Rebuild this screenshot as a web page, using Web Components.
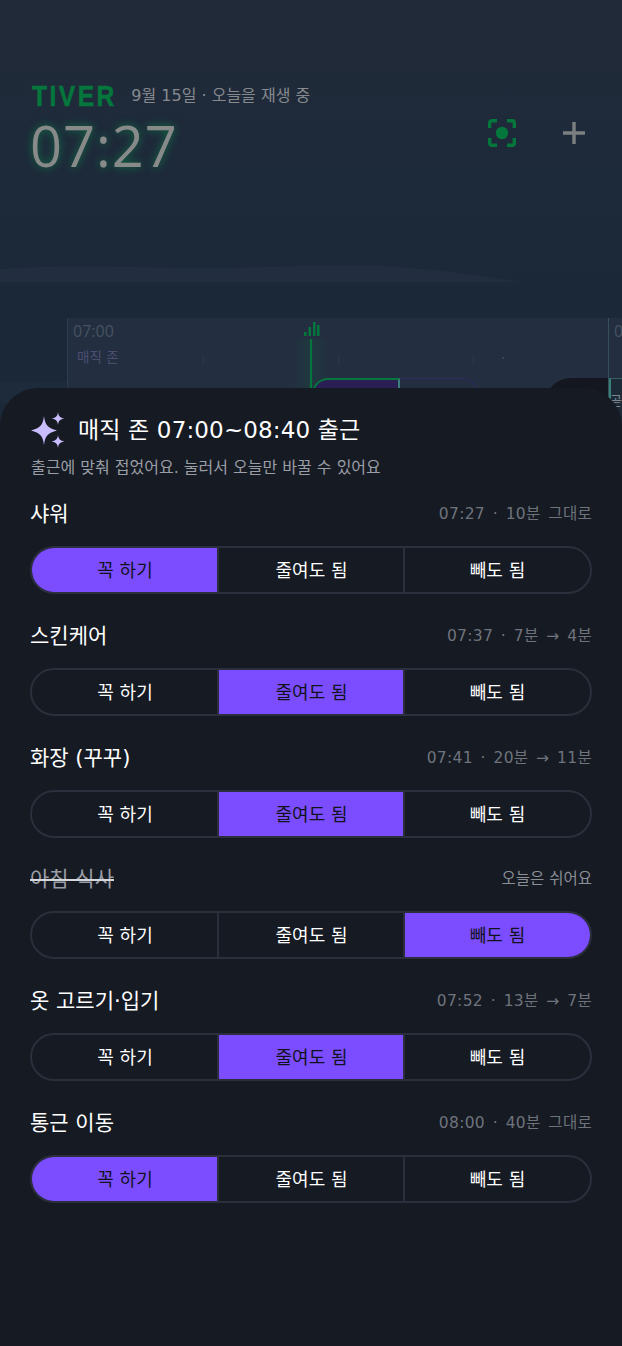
<!DOCTYPE html>
<html lang="ko">
<head>
<meta charset="utf-8">
<title>TIVER</title>
<style>
  html, body { margin: 0; height: 100%; background: #1a2636; }
  body { font-family: "DejaVu Sans", "Noto Sans CJK KR", sans-serif; overflow: hidden; }
</style>
</head>
<body>
<tiver-app></tiver-app>

<template id="home-header-tpl">
  <style>
    :host { display: block; padding: 82px 31px 0 32px; }
    .top { display: flex; align-items: center; gap: 14px; height: 28px; }
    .logo { font: 700 30px/28px "Liberation Sans", sans-serif; letter-spacing: 3px; color: #05763c;
      -webkit-text-stroke: .6px #05763c; transform: scaleX(.82); transform-origin: 0 50%; margin-right: -18px; }
    .date { font-size: 16px; color: #868a8f; margin-top: -4px; }
    .row { display: flex; align-items: flex-start; margin-top: 3px; }
    .clock { flex: 1; margin-left: -2px; font: 400 56px/64px "Open Sans", sans-serif; letter-spacing: 1px; color: #888a8a;
      text-shadow: 0 0 8px rgba(10, 150, 80, .7); }
    .actions { display: flex; align-items: center; gap: 45px; margin: 5px 5px 0 0; }
    svg { display: block; }
  </style>
  <div class="top"><span class="logo">TIVER</span><span class="date">9월 15일 · 오늘을 재생 중</span></div>
  <div class="row">
    <div class="clock">07:27</div>
    <div class="actions">
      <svg width="30" height="30" viewBox="0 0 30 30" fill="none" stroke="#05763c" stroke-width="3.400">
        <path d="M2.700 10V4.700a2 2 0 0 1 2-2H10M20 2.700h5.300a2 2 0 0 1 2 2V10M27.300 20v5.300a2 2 0 0 1-2 2H20M10 27.300H4.700a2 2 0 0 1-2-2V20"/>
        <circle cx="15" cy="15" r="6.200" fill="#05763c" stroke="none"/>
      </svg>
      <svg width="24" height="24" viewBox="0 0 24 24" fill="none" stroke="#7c7f80" stroke-width="3.400">
        <path d="M12 1v22M1 12h22"/>
      </svg>
    </div>
  </div>
</template>

<template id="time-line-tpl">
  <style>
    :host { display: block; position: absolute; left: 0; top: 262px; width: 622px; height: 160px; }
    .wave { position: absolute; left: 0; top: 0; }
    .band { position: absolute; left: 0; top: 120px; width: 67px; height: 20px; background: #1e2b3b; }
    .panel { position: absolute; left: 67px; top: 56px; width: 541px; height: 84px; background: #232f40;
      border-left: 1px solid #2e3b4a; }
    .panel.next { left: 608px; width: 20px; height: 104px; border-left-color: #35505a; }
    .hour { position: absolute; left: 5px; top: 3px; font: 400 16px/20px "Open Sans", sans-serif; color: #465260; }
    .zone { position: absolute; left: 9px; top: 29px; font-size: 13.500px; line-height: 20px; color: #4e4d72; }
    .bars { position: absolute; left: 236px; top: 4px; }
    .stem { position: absolute; left: 242px; top: 21px; width: 2px; height: 63px; background: #05763c; }
    .glow { position: absolute; left: 226px; top: 21px; width: 34px; height: 63px;
      background: linear-gradient(90deg, transparent, rgba(5, 118, 60, .14), transparent); }
    .tick { position: absolute; top: 37px; width: 1px; height: 10px; background: #2b3848; }
    .dot { position: absolute; left: 434px; top: 39px; width: 2px; height: 2px; background: #3a4656; }
    .done { position: absolute; left: 244px; top: 60px; width: 88px; height: 30px; box-sizing: border-box;
      background: #2a1f55; border: 2px solid #05763c; border-right-color: #3a7f78; border-bottom: 0; border-radius: 16px 0 0 0; }
    .rest { position: absolute; left: 332px; top: 60px; width: 78px; height: 30px; box-sizing: border-box;
      border: 1px solid #2f2a60; border-left: 0; border-bottom: 0; border-radius: 0 16px 0 0; }
    .pill { position: absolute; left: 545px; top: 116px; width: 63px; height: 30px; background: #14171f; border-radius: 26px 0 0 0; }
    .next-card { position: absolute; left: 0; top: 60px; width: 20px; height: 44px; background: #1c2a38;
      border-top: 1px solid #3a5f63; border-left: 2px solid #3a7f78; }
    .next-text { position: absolute; left: 1px; top: 74px; font-size: 13px; line-height: 18px; color: #7f8690; white-space: nowrap; }
  </style>
  <svg class="wave" width="622" height="20" viewBox="0 0 622 20">
    <path d="M0 7C60 3 120 5 190 6S320 1 380 4 480 14 522 20H0Z" fill="#222e3f"/>
  </svg>
  <div class="band"></div>
  <div class="panel">
    <span class="hour">07:00</span>
    <span class="zone">매직 존</span>
    <svg class="bars" width="16" height="15" viewBox="0 0 16 15" fill="#05763c">
      <rect x="0" y="10" width="2.500" height="4"/><rect x="4.500" y="5" width="2.500" height="9"/>
      <rect x="9" y="0" width="2.500" height="14"/><rect x="13" y="3" width="2.500" height="11"/>
    </svg>
    <div class="glow"></div>
    <div class="tick" style="left:135px"></div>
    <div class="tick" style="left:270px"></div>
    <div class="tick" style="left:405px"></div>
    <div class="dot"></div>
    <div class="stem"></div>
    <div class="done"></div>
    <div class="rest"></div>
  </div>
  <div class="pill"></div>
  <div class="panel next">
    <span class="hour">07:00</span>
    <div class="next-card"></div>
    <span class="next-text">곧 시작</span>
  </div>
</template>

<template id="bottom-sheet-tpl">
  <style>
    :host { display: block; position: absolute; left: 0; right: 0; top: 388px; bottom: 0; box-sizing: border-box;
      padding: 25px 30px 0; background: #161a23; border-radius: 38px 38px 0 0; color: #fff; }
    .head { display: flex; align-items: center; gap: 12px; height: 34px; }
    h1 { margin: 0; font-size: 23px; font-weight: 400; line-height: 34px; letter-spacing: .15px; }
    p { margin: 8px 0 0 1px; font-size: 16px; line-height: 26px; color: #9a9ea6; }
    svg { display: block; flex: none; margin-left: 1px; }
    .list { margin-top: 15px; display: flex; flex-direction: column; gap: 23.800px; }
  </style>
  <div class="head">
    <svg width="35" height="36" viewBox="0 0 35 36" fill="#cabdff">
      <path d="M13 4C14 13 17 16 26 18.500 17 21 14 24 13 33 12 24 9 21 0 18.500 9 16 12 13 13 4Z" />
      <path d="M27 0C27.500 4 29 6 33.500 6.500 29 7 27.500 9 27 13 26.500 9 25 7 20.500 6.500 25 6 26.500 4 27 0Z"/>
      <path d="M27 23C27.500 27 29 28.500 33.500 29.500 29 30 27.500 32 27 36 26.500 32 25 30 20.500 29.500 25 28.500 26.500 27 27 23Z"/>
    </svg>
    <h1>매직 존 07:00~08:40 출근</h1>
  </div>
  <p>출근에 맞춰 접었어요. 눌러서 오늘만 바꿀 수 있어요</p>
  <div class="list"><slot></slot></div>
</template>

<template id="routine-row-tpl">
  <style>
    :host { display: block; }
    .line { display: flex; align-items: center; justify-content: space-between; height: 34px; margin-bottom: 16px; }
    .name { font-size: 21px; color: #fff; padding-bottom: 2px; }
    :host([skipped]) .name { color: #9a9ea6; text-decoration: line-through; text-decoration-color: #d5d7da; }
    .meta { font-size: 15.500px; color: #6e737c; word-spacing: 2.500px; letter-spacing: .3px; padding-bottom: 2px; }
    :host([skipped]) .meta { color: #8a8e96; word-spacing: 0; letter-spacing: 0; }
    .seg { display: grid; grid-template-columns: repeat(3, 1fr); height: 48px; box-sizing: border-box;
      border: 2px solid #2b2f3c; border-radius: 24px; overflow: hidden; }
    .seg span { display: flex; align-items: center; justify-content: center; font-size: 18px; color: #fff; padding-bottom: 2px; }
    .seg span + span { border-left: 2px solid #2b2f3c; margin-left: -1px; }
    .seg span.on { background: #7c4dff; color: #10131a; }
  </style>
  <div class="line"><span class="name"></span><span class="meta"></span></div>
  <div class="seg"><span>꼭 하기</span><span>줄여도 됨</span><span>빼도 됨</span></div>
</template>

<script>
function tplRoot(el, id) {
  const root = el.attachShadow({ mode: "open" })
  root.appendChild(document.getElementById(id).content.cloneNode(true))
  return root
}

class HomeHeader extends HTMLElement {
  connectedCallback() { tplRoot(this, "home-header-tpl") }
}
class TimeLine extends HTMLElement {
  connectedCallback() { tplRoot(this, "time-line-tpl") }
}
class BottomSheet extends HTMLElement {
  connectedCallback() { tplRoot(this, "bottom-sheet-tpl") }
}
class RoutineRow extends HTMLElement {
  connectedCallback() {
    const root = tplRoot(this, "routine-row-tpl")
    root.querySelector(".name").textContent = this.getAttribute("name")
    root.querySelector(".meta").textContent = this.getAttribute("meta")
    root.querySelectorAll(".seg span")[+this.getAttribute("pick")].classList.add("on")
  }
}
class TiverApp extends HTMLElement {
  connectedCallback() {
    const root = this.attachShadow({ mode: "open" })
    root.innerHTML = `
      <style>
        :host { display: block; position: relative; width: 622px; height: 1346px; overflow: hidden;
          background: linear-gradient(180deg, #212a39 0, #1d2a3a 190px, #1a2838 300px, #1a2636 100%); }
      </style>
      <home-header></home-header>
      <time-line></time-line>
      <bottom-sheet>
        <routine-row name="샤워" meta="07:27 · 10분 그대로" pick="0"></routine-row>
        <routine-row name="스킨케어" meta="07:37 · 7분 → 4분" pick="1"></routine-row>
        <routine-row name="화장 (꾸꾸)" meta="07:41 · 20분 → 11분" pick="1"></routine-row>
        <routine-row name="아침 식사" meta="오늘은 쉬어요" pick="2" skipped></routine-row>
        <routine-row name="옷 고르기·입기" meta="07:52 · 13분 → 7분" pick="1"></routine-row>
        <routine-row name="통근 이동" meta="08:00 · 40분 그대로" pick="0"></routine-row>
      </bottom-sheet>`
  }
}

customElements.define("home-header", HomeHeader)
customElements.define("time-line", TimeLine)
customElements.define("bottom-sheet", BottomSheet)
customElements.define("routine-row", RoutineRow)
customElements.define("tiver-app", TiverApp)
</script>
</body>
</html>
